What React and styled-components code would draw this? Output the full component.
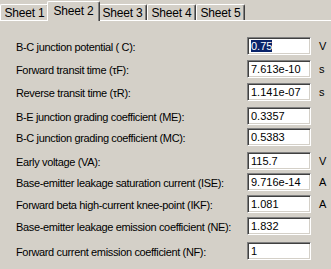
import React from 'react';
import styled, { createGlobalStyle } from 'styled-components';

const GlobalStyle = createGlobalStyle`
  html, body {
    margin: 0;
    padding: 0;
    background: #d4d0c8;
  }
  body {
    font-family: "Liberation Sans", Arial, sans-serif;
    font-size: 11px;
    color: #000;
  }
`;

const tabs = ['Sheet 1', 'Sheet 2', 'Sheet 3', 'Sheet 4', 'Sheet 5'];

const params = [
  { label: 'B-C junction potential ( C):', value: '0.75', unit: 'V', gap: 16, selected: true },
  { label: 'Forward transit time (\u03c4F):', value: '7.613e-10', unit: 's', gap: 5 },
  { label: 'Reverse transit time (\u03c4R):', value: '1.141e-07', unit: 's', gap: 5 },
  { label: 'B-E junction grading coefficient (ME):', value: '0.3357', unit: '', gap: 6 },
  { label: 'B-C junction grading coefficient (MC):', value: '0.5383', unit: '', gap: 3 },
  { label: 'Early voltage (VA):', value: '115.7', unit: 'V', gap: 6 },
  { label: 'Base-emitter leakage saturation current (ISE):', value: '9.716e-14', unit: 'A', gap: 3 },
  { label: 'Forward beta high-current knee-point (IKF):', value: '1.081', unit: 'A', gap: 4 },
  { label: 'Base-emitter leakage emission coefficient (NE):', value: '1.832', unit: '', gap: 4 },
  { label: 'Forward current emission coefficient (NF):', value: '1', unit: '', gap: 7 },
];

const App = () => {
  return (
    <Window>
      <GlobalStyle />
      <TabStrip>
        {tabs.map((t) => (
          <Tab key={t} active={t === 'Sheet 2'}>
            {t}
          </Tab>
        ))}
      </TabStrip>
      <Panel>
        {params.map((p) => (
          <Row key={p.label} gap={p.gap}>
            <Label>{p.label}</Label>
            <Field>
              {p.selected ? <Selected>{p.value}</Selected> : p.value}
            </Field>
            <Unit>{p.unit}</Unit>
          </Row>
        ))}
      </Panel>
    </Window>
  );
};

const Window = styled.div`
  width: 331px;
  height: 269px;
  overflow: hidden;
  background: #d4d0c8;
`;

const TabStrip = styled.div`
  display: flex;
  align-items: flex-end;
  height: 20px;
  border-bottom: 1px solid #fff;
`;

const Tab = styled.div`
  position: relative;
  box-sizing: border-box;
  display: flex;
  align-items: center;
  justify-content: center;
  width: ${(p) => (p.active ? '53px' : '49px')};
  height: ${(p) => (p.active ? '20px' : '16px')};
  margin: ${(p) => (p.active ? '0 -2px -1px' : '0')};
  padding-bottom: ${(p) => (p.active ? '2px' : '0')};
  z-index: ${(p) => (p.active ? 1 : 0)};
  background: #d4d0c8;
  border-left: 1px solid #fff;
  border-top: 1px solid #fff;
  border-right: 1px solid #404040;
  border-top-left-radius: 2px;
  border-top-right-radius: 2px;
  box-shadow: inset -1px 0 #808080;
  font-size: 12px;
  letter-spacing: -0.2px;
  white-space: nowrap;
`;

const Panel = styled.div`
  display: flex;
  flex-direction: column;
`;

const Row = styled.div`
  display: grid;
  grid-template-columns: 231px 64px 20px;
  align-items: center;
  padding-left: 16px;
  margin-top: ${(p) => p.gap}px;
`;

const Label = styled.div`
  white-space: nowrap;
  letter-spacing: -0.35px;
  padding-top: 1px;
`;

const Field = styled.div`
  box-sizing: border-box;
  height: 18px;
  padding: 2px 0 0 3px;
  background: #fff;
  border-top: 1px solid #808080;
  border-left: 1px solid #808080;
  border-bottom: 1px solid #fff;
  border-right: 1px solid #fff;
  box-shadow: inset 1px 1px #404040, inset -1px -1px #d4d0c8;
  line-height: 13px;
  white-space: nowrap;
  overflow: hidden;
`;

const Selected = styled.span`
  background: #0a246a;
  color: #fff;
`;

const Unit = styled.div`
  padding-left: 8px;
`;

export default App;
